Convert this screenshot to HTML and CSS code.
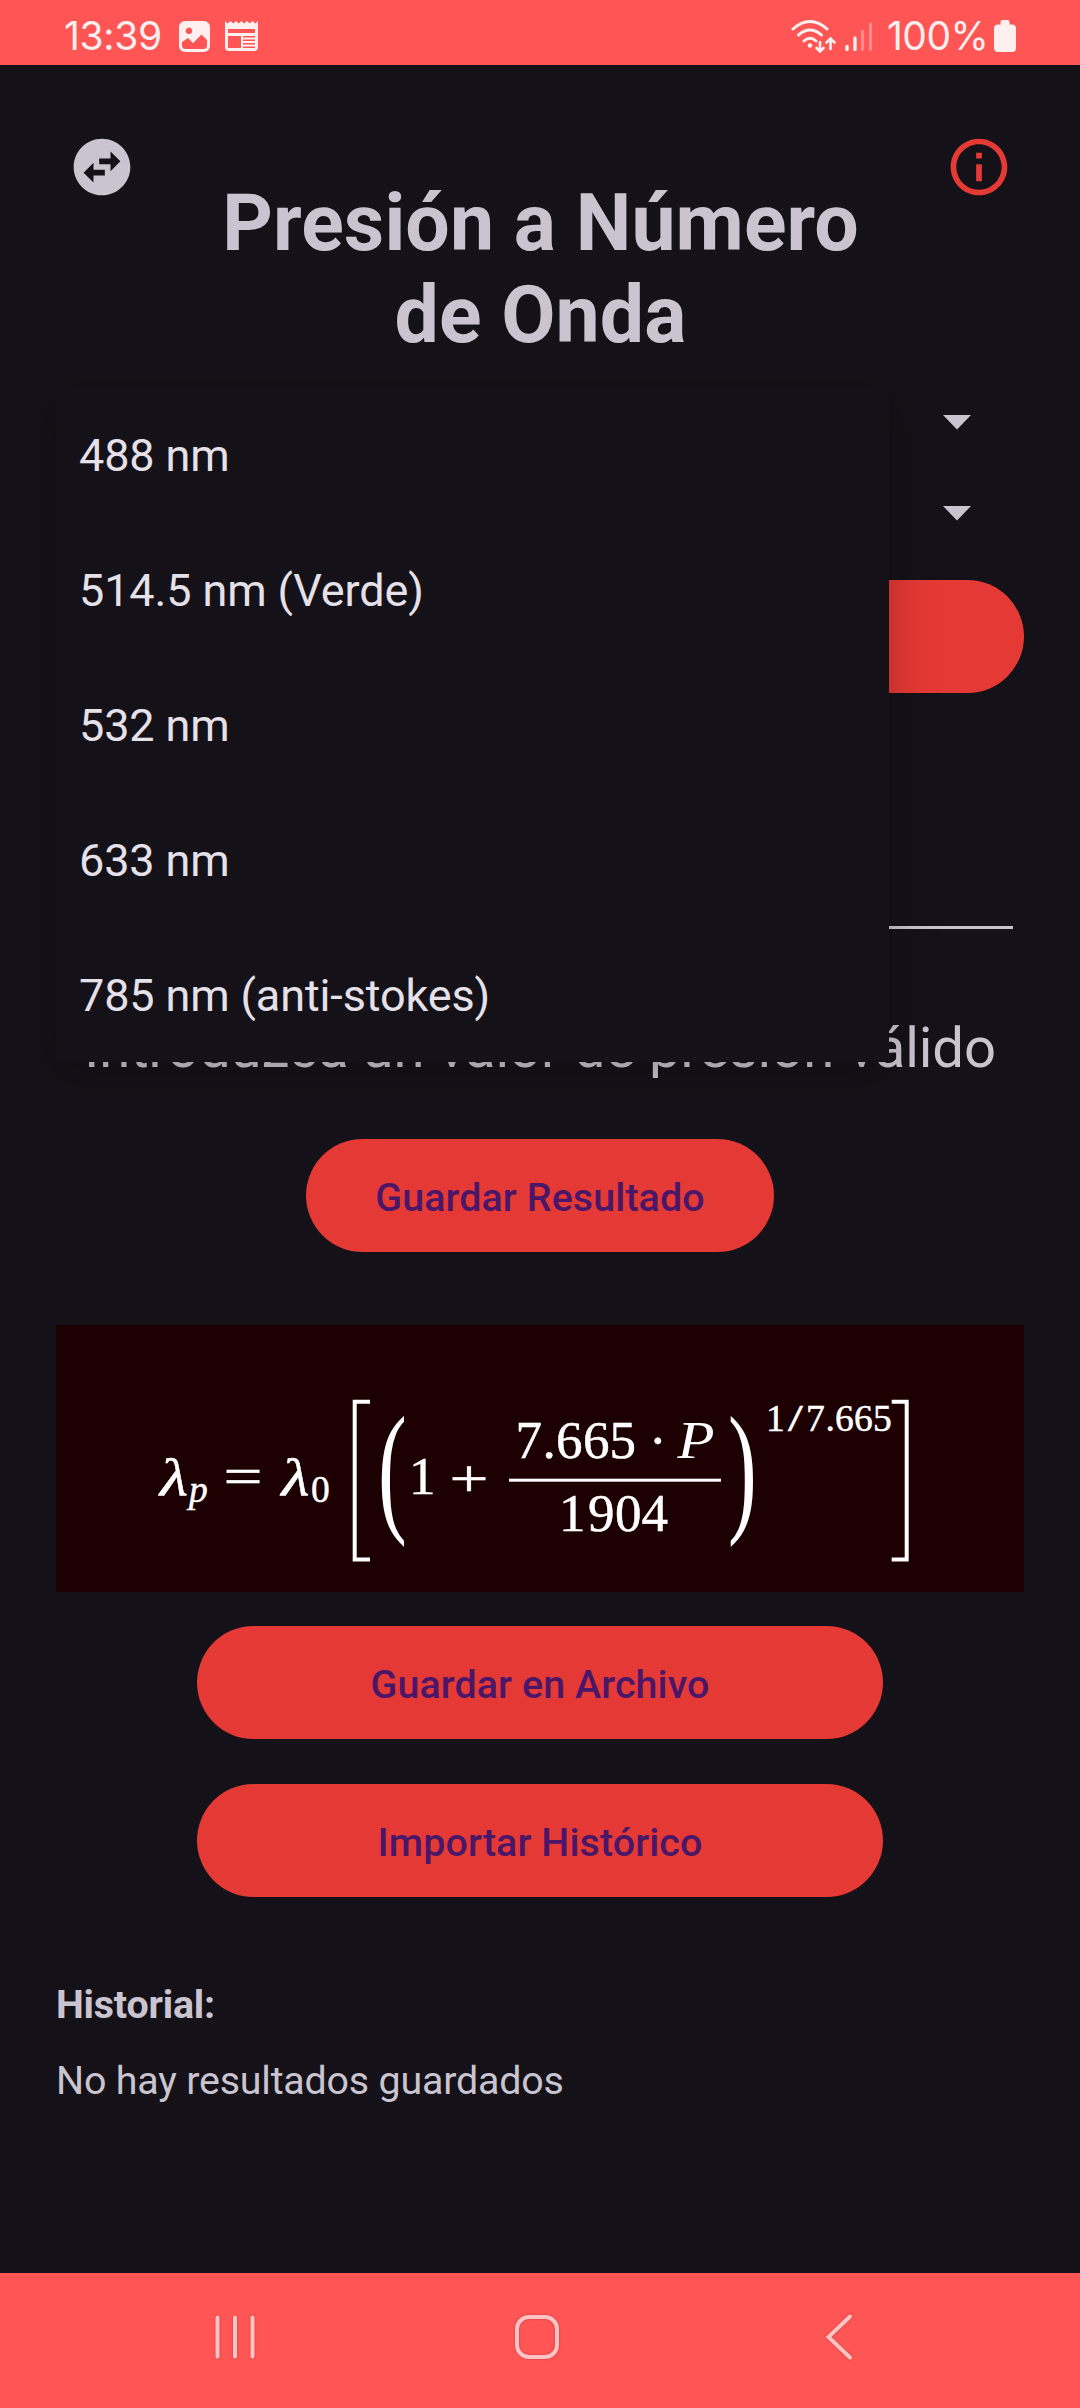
FILE: index.html
```
<!DOCTYPE html>
<html lang="es">
<head>
<meta charset="utf-8">
<title>Presión a Número de Onda</title>
<link rel="stylesheet" href="styles.css">
</head>
<body>
<div class="screen">
  <div class="status-bar">
    <div class="status-left">
      <span class="clock">13:39</span>
      <svg class="status-image" width="31" height="31" viewBox="0 0 31 31"><path fill-rule="evenodd" d="M6 0h19a6 6 0 0 1 6 6v19a6 6 0 0 1-6 6H6a6 6 0 0 1-6-6V6a6 6 0 0 1 6-6zM10 6.500a3.300 3.300 0 1 0 .01 0zM3 21v3.500q0 3.500 3.500 3.500h18q3.500 0 3.500-3.500V19l-5.500-5.500-8.500 8.500-5-5z" fill="#fff0ef"/></svg>
      <svg class="status-news" width="33" height="30" viewBox="0 0 33 30"><path fill-rule="evenodd" d="M0 0l2.700 2.500L5.500 0l2.700 2.500L11 0l2.700 2.500L16.500 0l2.700 2.500L22 0l2.700 2.500L27.500 0l2.700 2.500L33 0v26q0 4-4 4H4q-4 0-4-4zM3 8v4h27V8zM3 15v12h13V15zM18 15v1.500h12V15zM18 18.500V20h12v-1.500zM18 22v1.500h12V22zM18 25.500V27h12v-1.500z" fill="#fff0ef"/></svg>
    </div>
    <div class="status-right">
      <svg width="82" height="33" viewBox="0 0 82 33" fill="none" stroke="#fff0ef" stroke-width="3" stroke-linecap="round">
        <path d="M2 9Q19-6 36 9M7.500 15Q19 5 30.500 15M13 21Q19 15.500 25 21"/>
        <circle cx="19" cy="25.500" r="2.300" fill="#fff0ef" stroke="none"/>
        <path stroke-width="2.600" d="M29 22v9M25.500 28l3.500 3.500 3.500-3.500M39.500 29v-10M35.500 22.500l4-4 4 4"/>
        <path stroke-width="3.400" d="M56 26.500v3M64 18v11.500"/>
        <path stroke-width="3.200" opacity=".35" d="M71.500 11v18.500M79.500 4v25.500"/>
      </svg>
      <span class="battery-text">100%</span>
      <svg class="battery" width="22" height="32" viewBox="0 0 22 32"><path d="M6.500 2q0-2 2-2h5q2 0 2 2v2.500H18q4 0 4 4V28q0 4-4 4H4q-4 0-4-4V8.500q0-4 4-4h2.500z" fill="#fff0ef"/></svg>
    </div>
  </div>

  <main class="content">
    <header class="header">
      <svg class="icon" viewBox="0 0 24 24" fill="#cac4d0"><path d="M22 12c0-5.520-4.480-10-10-10S2 6.480 2 12s4.480 10 10 10 10-4.480 10-10zm-7-5.500l3.500 3.500-3.500 3.500V11h-4V9h4V6.500zm-6 11L5.500 14 9 10.500V13h4v2H9v2.500z"/></svg>
      <h1 class="title">Presión a Número<br>de Onda</h1>
      <svg class="icon" viewBox="0 0 24 24" fill="#e53935"><path d="M11 7h2v2h-2zm0 4h2v6h-2zm1-9C6.480 2 2 6.480 2 12s4.480 10 10 10 10-4.480 10-10S17.520 2 12 2zm0 18c-4.410 0-8-3.590-8-8s3.590-8 8-8 8 3.590 8 8-3.590 8-8 8z"/></svg>
    </header>

    <div class="select"><svg width="28" height="15" viewBox="0 0 28 15"><path d="M0 0h28L14 14.500z" fill="#cac4d0"/></svg></div>
    <div class="select"><svg width="28" height="15" viewBox="0 0 28 15"><path d="M0 0h28L14 14.500z" fill="#cac4d0"/></svg></div>
    <div class="button button-full"></div>
    <div class="field"></div>
    <p class="message">Introduzca un valor de presión válido</p>
    <div class="button button-result">Guardar Resultado</div>

    <div class="formula">
      <svg width="968" height="267" viewBox="56 1325 968 267" fill="#fff">
        <g class="math">
          <text class="it" x="160" y="1494.500" textLength="28" lengthAdjust="spacingAndGlyphs">λ</text>
          <text class="it sub" x="189" y="1501.700">p</text>
          <text x="223.500" y="1494" textLength="39" lengthAdjust="spacingAndGlyphs">=</text>
          <text class="it" x="281.500" y="1494.500" textLength="28" lengthAdjust="spacingAndGlyphs">λ</text>
          <text class="sub" x="311" y="1501.700">0</text>
          <text x="409" y="1494">1</text>
          <text x="449.500" y="1496" textLength="39" lengthAdjust="spacingAndGlyphs">+</text>
          <text x="515.500 542.500 556 583 609.500" y="1458">7.665</text>
          <text x="649" y="1458">·</text>
          <text class="it thin" x="677.500" y="1458" textLength="37" lengthAdjust="spacingAndGlyphs">P</text>
          <text x="559 588 615 641.500" y="1531.300">1904</text>
          <text class="sub" x="766" y="1430.700">1</text>
          <text class="slash" transform="translate(788 1430.700) scale(1.420 1)">/</text>
          <text class="sub" x="806 825.500 835 854 873" y="1430.700">7.665</text>
        </g>
        <g class="paren">
          <text transform="translate(378 1516) scale(.6 1)">(</text>
          <text transform="translate(728 1516) scale(.6 1)">)</text>
        </g>
        <rect x="509" y="1478.700" width="212" height="3"/>
        <path fill="none" stroke="#fff" stroke-width="4" d="M370 1401.700H354.700V1559.500H370M891.700 1401.700H906.700V1559.500H891.700"/>
      </svg>
    </div>

    <div class="button button-file">Guardar en Archivo</div>
    <div class="button button-import">Importar Histórico</div>
    <h2 class="history-title">Historial:</h2>
    <p class="history-empty">No hay resultados guardados</p>

    <ul class="dropdown">
      <li>488 nm</li>
      <li>514.5 nm (Verde)</li>
      <li>532 nm</li>
      <li>633 nm</li>
      <li>785 nm (anti-stokes)</li>
    </ul>
  </main>

  <nav class="nav-bar">
    <svg class="nav-icon" width="42" height="48" viewBox="0 0 42 48"><path d="M3.500 4.500v39M21 4.500v39M38.500 4.500v39"/></svg>
    <svg class="nav-icon nav-home" width="48" height="48" viewBox="0 0 48 48"><rect x="4" y="4" width="40" height="40" rx="12"/></svg>
    <svg class="nav-icon" width="30" height="50" viewBox="0 0 30 50"><path d="M26 3.500L4.500 24 26 44.500"/></svg>
  </nav>
</div>
</body>
</html>
```
FILE: styles.css
```
* {
  box-sizing: border-box;
  margin: 0;
  padding: 0;
}

body {
  background: #141218;
  font-family: Roboto, "Liberation Sans", sans-serif;
  color: #cac4d0;
}

svg {
  display: block;
  flex: none;
}

.screen {
  display: flex;
  flex-direction: column;
  width: 1080px;
  height: 2408px;
  overflow: hidden;
}

.status-bar {
  display: flex;
  justify-content: space-between;
  height: 65px;
  padding: 0 64px 0 64px;
  background: #ff5555;
  color: #fff0ef;
  font-family: Inter, Roboto, sans-serif;
  font-size: 39px;
  line-height: 72px;
}

.status-left,
.status-right {
  display: flex;
  align-items: flex-start;
}

.clock {
  width: 115px;
  letter-spacing: -0.3px;
}

.status-image {
  margin-top: 21px;
}

.status-news {
  margin: 21px 0 0 15px;
}

.status-right svg {
  margin-top: 20px;
}

.battery-text {
  width: 107px;
  margin-left: 14px;
  letter-spacing: -0.5px;
}

.content {
  position: relative;
  display: flex;
  flex-direction: column;
  flex: 1;
  padding: 68px 56px 0;
}

.header {
  display: flex;
  justify-content: space-between;
  height: 229px;
  padding: 0 11px 0 12px;
}

.icon {
  width: 68px;
  height: 68px;
}

.title {
  padding-top: 44px;
  font-size: 78.75px;
  line-height: 92.3px;
  font-weight: 700;
  letter-spacing: 0.1px;
  text-align: center;
  white-space: nowrap;
}

.select {
  display: flex;
  align-items: center;
  justify-content: flex-end;
  height: 91px;
  padding-right: 53px;
}

.header + .select {
  margin-top: 15px;
}

.button {
  display: flex;
  align-items: center;
  justify-content: center;
  align-self: center;
  flex: none;
  height: 113px;
  padding-top: 4px;
  border-radius: 57px;
  background: #e53935;
  color: #4a1768;
  font-size: 39.4px;
  font-weight: 500;
  letter-spacing: 0.1px;
}

.button-full {
  width: 968px;
  margin-top: 21px;
}

.field {
  height: 236px;
  margin: 0 11px;
  border-bottom: 3px solid #cac4d0;
}

.message {
  margin-top: 86px;
  font-size: 56.25px;
  line-height: 66px;
  letter-spacing: -0.1px;
  text-align: center;
  white-space: nowrap;
}

.button-result {
  width: 468px;
  margin-top: 58px;
}

.formula {
  height: 267px;
  margin-top: 73px;
  background: #1c0002;
}

.math,
.paren {
  font-family: "Liberation Serif", serif;
}

.math {
  font-size: 53px;
  stroke: #fff;
  stroke-width: 0.5px;
}

.math .it {
  font-style: italic;
}

.math .thin {
  stroke: none;
}

.math .sub,
.math .slash {
  font-size: 37.5px;
}

.paren {
  font-size: 144px;
}

.button-file {
  width: 686px;
  margin-top: 34px;
}

.button-import {
  width: 686px;
  margin-top: 45px;
}

.history-title,
.history-empty {
  font-size: 39.4px;
  line-height: 46px;
  letter-spacing: -0.2px;
}

.history-title {
  margin-top: 85px;
  font-weight: 700;
}

.history-empty {
  margin-top: 30px;
}

.dropdown {
  position: absolute;
  left: 56px;
  top: 322px;
  width: 833px;
  background: #141218;
  color: #e6e0e9;
  font-size: 45px;
  letter-spacing: -0.13px;
  list-style: none;
  box-shadow: 0 10px 44px rgba(0, 0, 0, 0.25);
}

.dropdown li {
  height: 135px;
  padding: 1px 0 0 23px;
  line-height: 135px;
}

.nav-bar {
  display: flex;
  align-items: flex-start;
  justify-content: space-between;
  height: 135px;
  padding: 40px 226px 0 214px;
  background: #ff5555;
}

.nav-icon {
  overflow: visible;
  fill: none;
  stroke: #ffc3c3;
  stroke-width: 4;
  stroke-linecap: round;
  filter: drop-shadow(0 0 1px rgba(120, 40, 40, 0.5));
}

.nav-home {
  margin-right: 7px;
}
```
